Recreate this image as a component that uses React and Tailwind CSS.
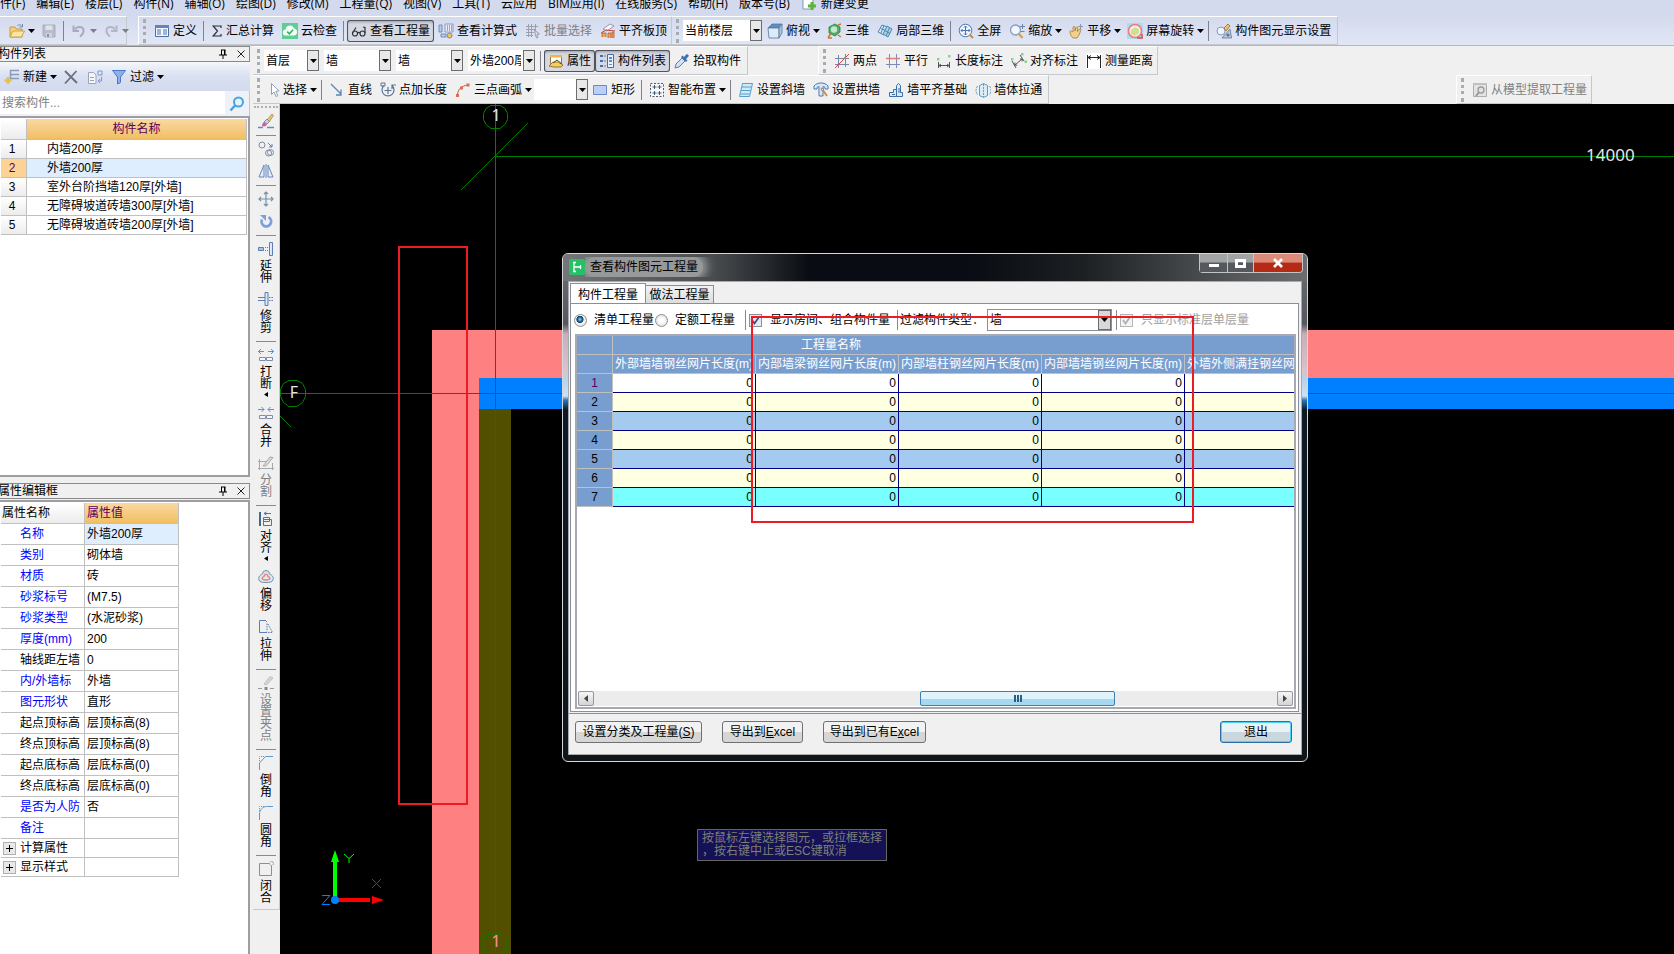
import React from "react";

const G = "#5b7fb0";

const ICONS = {
  folder: (
    <g>
      <path d="M1 14V4h5l1.5 2H13v8z" fill="#f3d27a" stroke="#b98c2c" strokeWidth=".8" />
      <path d="M1 14l3-6h11.5l-3 6z" fill="#fbe6a0" stroke="#c2953a" strokeWidth=".8" />
      <path d="M8 3c2-2 4-1.5 5 .5M13.5 1v3h-3" fill="none" stroke="#6d8fb9" />
    </g>
  ),
  save: (
    <g>
      <path d="M2 2h12v12H3.5L2 12.5z" fill="#b9bdc9" stroke="#a0a4b0" strokeWidth=".8" />
      <path d="M4.5 2.5h7V7h-7z" fill="#dfe2ea" />
      <path d="M5 10h6v4H5z" fill="#cfd3dd" />
      <path d="M6 11h2v3H6z" fill="#8f94a3" />
    </g>
  ),
  undo: (
    <g fill="none" stroke="#a7adbd" strokeWidth="2">
      <path d="M4 6.500c2-3.500 8-3.500 8.500.5.3 3-1.500 5-3.500 6.500" />
      <path d="M2.500 2.500V8H8" />
    </g>
  ),
  redo: (
    <g fill="none" stroke="#b3b8c6" strokeWidth="2">
      <path d="M12 6.500C10 3 4 3 3.500 7c-.3 3 1.500 5 3.500 6.500" />
      <path d="M13.500 2.500V8H8" />
    </g>
  ),
  define: (
    <g>
      <path d="M1.500 2.500h13v11h-13z" fill="#f4f8ff" stroke="#4d6ea3" />
      <path d="M1 2h14v3H1z" fill="#5e84c2" />
      <path d="M3 7h4M3 9h4M3 11h4M9 7h4M9 9h4M9 11h4" stroke="#4d6ea3" />
    </g>
  ),
  sigma: <path d="M12 5V3H4.200l4.300 5-4.300 5H12v-2" fill="none" stroke="#2a2f3a" strokeWidth="1.200" />,
  cloud: (
    <g>
      <path d="M0 0h16v16H0z" fill="#5fce90" />
      <path d="M4 12.500a3 3 0 0 1-.4-6A4.300 4.300 0 0 1 12 5.600a3.500 3.500 0 0 1 .2 6.900z" fill="#f1fff7" />
      <path d="M5.200 8.600l2.200 2.200 3.600-4" fill="none" stroke="#2fae68" strokeWidth="1.500" />
    </g>
  ),
  glasses: (
    <g fill="none" stroke="#2b3140" strokeWidth="1.200">
      <circle cx="4" cy="10.500" r="2.500" />
      <circle cx="11.500" cy="10.500" r="2.500" />
      <path d="M6.500 10c.8-.8 1.800-.8 2.500 0M1.500 10L5 4.500M14 10V4.500l-2-.5" />
    </g>
  ),
  formula: (
    <g>
      <path d="M7 1h8v8H7z" fill="#e8edf8" stroke="#7485ab" strokeWidth=".8" />
      <path d="M9 3h1M11 3h1M13 3h1M9 5h1M11 5h1M13 5h1M9 7h1M11 7h1M13 7h1" stroke="#536387" />
      <path d="M1 2h3v7H1zM3 11h5v3H3z" fill="#b9cdea" stroke="#5b7fb0" strokeWidth=".8" />
      <circle cx="11.500" cy="12.500" r="2.500" fill="#f1c063" stroke="#7186b5" />
    </g>
  ),
  batch: (
    <g fill="none" stroke="#9aa0ad">
      <path d="M1 3.500h12M1 6.500h9M1 9.500h8M1 12.500h7M3.500 1v13M6.500 1v13M10.500 1v7" />
      <path d="M9.500 7l5 4-2.500.5 1 3-1.500.5-1-3z" fill="#d7dae3" />
    </g>
  ),
  slab: (
    <g>
      <path d="M3 6l7-5 4 2-7 5z" fill="#f5f6fa" stroke="#7b8498" strokeWidth=".8" />
      <path d="M2 14v-4h4v4M8 15v-5h3v5M12 15V9h2v6" fill="#f0a94a" stroke="#b0583a" strokeWidth=".8" />
      <path d="M1 10l5-3 9 1" fill="none" stroke="#c2443a" />
    </g>
  ),
  cube: (
    <g strokeWidth=".8" stroke="#56779d">
      <path d="M1 5l4-4h10l-3 4z" fill="#5c8fc0" />
      <path d="M1 5h11v10H2z" fill="#dcebf8" />
      <path d="M12 5l3-4v9l-3 5z" fill="#a6c8e4" />
    </g>
  ),
  view3d: (
    <g>
      <path d="M3 4l6-3 5 3v5l-5 4-6-3z" fill="#4fae62" stroke="#2c7a42" strokeWidth=".8" />
      <circle cx="8" cy="6.500" r="3.200" fill="#d8f2dc" opacity=".85" />
      <path d="M2 15l3-5M2 15h4M12 2l3-1M12 12l3 2" stroke="#c9763a" strokeWidth="1.500" fill="none" />
    </g>
  ),
  local3d: (
    <g fill="#d7ecf8" stroke="#4f87ad">
      <path d="M1 9l4-7 5 2-3 8z" />
      <path d="M6 11l4-8 5 3-4 8z" fill="#a9d2ea" />
      <path d="M3.500 5.500l5 2M8 7.500l5 3M7 2.500L4 10M12.500 4.500L9 13" fill="none" />
    </g>
  ),
  fit: (
    <g fill="none" stroke="#4f77ad">
      <circle cx="7.500" cy="7.500" r="6.300" fill="#eef5ff" />
      <path d="M7.500 3v9M3 7.500h9M6 4.500L7.500 3 9 4.500M6 10.500L7.500 12 9 10.500M4.500 6L3 7.500 4.500 9M10.500 6L12 7.500 10.500 9" />
      <path d="M12 12l3 3" stroke="#c58b43" strokeWidth="2" />
    </g>
  ),
  zoom: (
    <g fill="none">
      <circle cx="6.500" cy="7" r="5" fill="#eef6ff" stroke="#8e9cb5" strokeWidth="1.300" />
      <path d="M10 11l3.500 4" stroke="#dca24a" strokeWidth="2.400" />
      <path d="M13.500 1v5M11 3.500h5M11.500 8.500h4" stroke="#6684ad" />
    </g>
  ),
  pan: (
    <g>
      <path d="M2 9c0-2 2-1 3 0V4.500c0-1.500 2-1.500 2 0V8l1-3.500c.4-1 2-.7 1.700.5L9.500 8.500l2-2.500c1-.8 2 .2 1.400 1.200L11 12l-2 3H5c-2-2-3-4-3-6z" fill="#f1cf8d" stroke="#a67b35" strokeWidth=".8" />
      <path d="M12.500 1v5M10 3.500h5" stroke="#8b95a5" />
    </g>
  ),
  rotateView: (
    <g>
      <path d="M0 0h16v16H0z" fill="#a9dcee" />
      <circle cx="8" cy="8" r="6.500" fill="#fdf0f0" stroke="#ee7b7b" strokeWidth="1.600" />
      <path d="M4 7l4-3 4 2v4l-4 3-4-2z" fill="#c3e29a" />
      <path d="M5 8l3 1v3M8 9l3-2" stroke="#eadb6a" strokeWidth="1.500" fill="none" />
      <path d="M10 15h5v-4" fill="none" stroke="#de4a4a" strokeWidth="1.500" />
    </g>
  ),
  display: (
    <g>
      <circle cx="5" cy="8" r="4" fill="#eef5ff" stroke="#8b9ab3" />
      <path d="M8 5l4-4 2 2-4 5z" fill="#f2c26a" stroke="#8b6a35" strokeWidth=".8" />
      <path d="M6 15l8-9 1.500 9z" fill="#b8c9de" stroke="#5d7394" strokeWidth=".8" />
      <circle cx="12" cy="12" r="1.600" fill="#5d7394" />
    </g>
  ),
  newChange: (
    <g>
      <path d="M2 0h10v12H2z" fill="#fff" stroke="#6fa0bb" />
      <path d="M11 5v8M7 9h8" stroke="#5cb531" strokeWidth="3" />
    </g>
  ),
  prop: (
    <g>
      <path d="M2.500 2.500h11v8h-11z" fill="#fff" stroke="#8a7a4f" />
      <path d="M2 2h12v2.500H2z" fill="#f0b53c" />
      <path d="M1 13l4-4h5l5 3-2 2H6z" fill="#f6cf5c" stroke="#7e6020" strokeWidth=".8" />
      <path d="M5 10l4-3 5 4" fill="none" stroke="#5c4a1c" />
    </g>
  ),
  complist: (
    <g>
      <path d="M1 2h3v2H1zM1 7h3v2H1zM1 12h3v2H1z" fill="#3f6fb7" />
      <path d="M5 3h2M5 8h2M5 13h2" stroke="#6d7c95" />
      <path d="M8.500 1.500h6v13h-6z" fill="#eaf2ff" stroke="#4a6b9d" />
      <path d="M10 4h3v2h-3zM10 7h3v2h-3z" fill="#5c8bd0" />
      <path d="M10 11.500h3" stroke="#5c8bd0" />
    </g>
  ),
  picker: (
    <g>
      <path d="M1 15l1-4 6-6 3 3-6 6z" fill="#cfe2f7" stroke="#5a7fae" />
      <path d="M7 4l5 5 1.500-1.500L12 6l2.500-2.500c.8-1.500-1-3-2.300-2L10 4 8.500 2.500z" fill="#3f71b5" />
    </g>
  ),
  twoPoint: (
    <g fill="none" stroke="#7a86a8">
      <path d="M4.500 2v13M11.500 1v13M1 5.500h14M1 11.500h14" />
      <path d="M1 15L15 1" stroke="#d14747" />
      <circle cx="11" cy="5" r="1" fill="#54b054" stroke="none" />
    </g>
  ),
  parallel: (
    <g fill="none" stroke="#7f89b8">
      <path d="M4.500 1v14M11.500 1v14M1 11.500h14" />
      <path d="M1 5.500h14" stroke="#d88080" strokeWidth="1.500" />
    </g>
  ),
  lenDim: (
    <g fill="none" stroke="#555">
      <path d="M2.500 9v6M13.500 9v6M3 12.500h10M5 11l-2 1.500L5 14M11 11l2 1.500L11 14" />
      <path d="M1 5h2.500v2.500H1zM12 2h2.500v2.500H12z" fill="#86d38a" stroke="none" />
    </g>
  ),
  alignDim: (
    <g fill="none" stroke="#555">
      <path d="M1 8l4 7M9 2l4 6M4 12l7-6M4 9.500L3.700 12l2.500.3M9 6h2.300L11 8.400" />
      <path d="M0 5h2.500v2.500H0zM10 0h2.500v2.500H10zM13.500 7.500H16V10h-2.500z" fill="#86d38a" stroke="none" />
    </g>
  ),
  measure: (
    <g>
      <path d="M0 0h16v16H0z" fill="#fff" />
      <path d="M1.500 2v13M14.500 2v13M2 4.500h12M5 2.500l-3 2 3 2M11 2.500l3 2-3 2" fill="none" stroke="#222" />
    </g>
  ),
  cursor: <path d="M5.500 1.500v11L8 10l2 4.500 1.800-.8-2-4.400 3.200-.3z" fill="#fff" stroke="#8ea0be" />,
  line: <path d="M2 2l10 10M12 7.500V13H7" fill="none" stroke="#5a82b8" strokeWidth="1.300" />,
  pointLen: (
    <g fill="none" stroke="#5a7299" strokeWidth="1.200">
      <path d="M4 3.500a6 6 0 1 0 8 0M12 7V3h4" />
      <path d="M8 5v7M4.500 8.500h7" />
      <path d="M1 1h4v3H1z" strokeWidth="1" />
    </g>
  ),
  arc: (
    <g fill="none" stroke="#8a6a62">
      <path d="M2.500 13c.5-6 4-9 10-10" />
      <path d="M1 12h3v3H1zM5 4.500h3v3H5zM11.500 1.500h3v3h-3z" fill="#e4694d" stroke="none" />
    </g>
  ),
  rect: <path d="M1.500 3.500h13v9h-13z" fill="#bcd0f7" stroke="#6d89c9" />,
  smart: (
    <g fill="none" stroke="#4c5a70">
      <path d="M1.500 1.500h13v13h-13z" strokeDasharray="2 1.500" fill="#f5f8fc" />
      <path d="M5.500 3v4M3.500 5h4M10.500 3v4M8.500 5h4M5.500 9v4M3.500 11h4M10.500 9v4M8.500 11h4" />
    </g>
  ),
  slope: (
    <g fill="#cfeaf8" stroke="#58a0cc">
      <path d="M4.500 1.500h10l-3 13h-10z" />
      <path d="M4 5h9.500M3 8.500h9.500M2.300 12h9.500" fill="none" />
    </g>
  ),
  arch: (
    <g>
      <path d="M1 4c3-4 11-4 14 0v3h-3V5.500c-1-.8-1.500-1-2-1V14H6V4.500c-.5 0-1 .2-2 1V7H1z" fill="#dbe8f8" stroke="#4a7ab8" />
      <path d="M9 7l5 7" stroke="#d08a4a" strokeWidth="2" />
      <path d="M8 6l3 1-2 2z" fill="#f7e6c0" stroke="#7d6b4b" strokeWidth=".6" />
    </g>
  ),
  foundation: (
    <g fill="#d9e9f8" stroke="#3e6fa6">
      <path d="M1.500 14.500v-4h4v-3h3v7zM8.500 14.500V3.500l2-2 2 2v7h2v4z" />
      <path d="M4 12.500h3M11 6v5" fill="none" />
    </g>
  ),
  through: (
    <g fill="none" stroke="#5c9cc8">
      <path d="M4.500 3.500l4-2 4 2v10l-4 2-4-2z" fill="#d8edf8" />
      <path d="M8.500 2v13M2.500 4c-2 3-2 6 0 9M14.500 4c2 3 2 6 0 9" strokeDasharray="2 1" />
    </g>
  ),
  extract: (
    <g>
      <path d="M1.500 1.500h13v13h-13z" fill="#e2e2e2" stroke="#adadad" />
      <path d="M1 1h14v2H1z" fill="#c0c0c0" />
      <circle cx="9" cy="8" r="3" fill="none" stroke="#9a9a9a" strokeWidth="1.300" />
      <path d="M7 10l-3 4" stroke="#9a9a9a" strokeWidth="2" />
    </g>
  ),
  add: (
    <g>
      <path d="M6 1.500h9M6 5.500h9M6 9.500h9M6.500 1v9" stroke="#8a9bb8" strokeWidth="1.500" fill="none" />
      <path d="M4 8v7M.5 11.500h7" stroke="#edbe3c" strokeWidth="2.600" />
    </g>
  ),
  del: <path d="M2 2l12 12M13.500 2L2 14.500" stroke="#6b6f78" strokeWidth="1.800" fill="none" />,
  copyDoc: (
    <g fill="#f4f6fa" stroke="#9aa5ba">
      <path d="M1.500 3.500h5L9 6v8.500H1.500z" />
      <path d="M3 8.500h4M3 11.500h4" />
      <path d="M11 2h4v4h-4zM14.500 8v4h-3M13 10l-2 2 2 2" fill="none" stroke="#7f97cf" />
    </g>
  ),
  funnel: <path d="M1.500 1.500h13L9.500 8v5.500l-3 1.500V8z" fill="#8bb0ea" stroke="#4e78c4" />,
  search: (
    <g fill="none" stroke="#4aa3e0" strokeWidth="2">
      <circle cx="9.500" cy="6" r="4.500" fill="#e4f4ff" />
      <path d="M6 9.500l-4.500 5" strokeWidth="2.500" />
    </g>
  ),
  brush: (
    <g>
      <path d="M9 7l5-6 1.500 1.500L11 9z" fill="#f0cd5c" stroke="#8f7c3f" strokeWidth=".7" />
      <path d="M6 9l3-3 2.500 2.500L9 11z" fill="#c9cfdb" stroke="#6b7387" strokeWidth=".7" />
      <path d="M4 13c0-2 .5-3 2-4l3 2.500c-.8 1.800-3 2.500-5 1.500z" fill="#cf5f9e" />
      <path d="M0 14.500h5M9 14.500h7" stroke="#5b8fc0" strokeWidth="1.500" />
    </g>
  ),
  copy: (
    <g fill="none" stroke="#7d8ba5">
      <circle cx="4" cy="4" r="3" />
      <circle cx="10.500" cy="12" r="3" />
      <circle cx="12.500" cy="11.500" r="3" />
      <path d="M10 2l4 4M14 3v3h-3" stroke="#5b7fb0" />
    </g>
  ),
  mirror: (
    <g fill="#e5eefb" stroke="#6687bf">
      <path d="M6 2v12H1zM10 2v12h5z" />
      <path d="M8 1v14" />
    </g>
  ),
  move: (
    <g fill="none" stroke="#7392ab" strokeWidth="1.200">
      <path d="M8 1v14M1 8h14M6 3l2-2 2 2M6 13l2 2 2-2M3 6L1 8l2 2M13 6l2 2-2 2" />
    </g>
  ),
  rotate: (
    <g fill="none" stroke="#7d9fdb">
      <path d="M4 6.500A4.800 4.800 0 1 0 10.500 4.300" strokeWidth="2.800" />
      <path d="M2 2h6v6z" fill="#7d9fdb" stroke="none" />
    </g>
  ),
  extend: (
    <g fill="#dbe8f5" stroke={G}>
      <path d="M11.500 1.500h3v13h-3z" />
      <path d="M.5 6.500h5v3h-5z" fill="#a8c6e4" />
      <path d="M7 6.500h4M7 9.500h4" strokeDasharray="1 1" />
    </g>
  ),
  trim: (
    <g fill="#dbe8f5" stroke={G}>
      <path d="M7 1.500h3v13H7z" />
      <path d="M0 6.500h7M0 9.500h7" />
      <path d="M11 6.500h5M11 9.500h5" strokeDasharray="1.500 1" />
    </g>
  ),
  breakApart: (
    <g fill="#f4f6fa" stroke="#7f8ea8">
      <path d="M1.500 10.500h6v3h-6zM8.500 10.500h6v3h-6z" />
      <path d="M0 4.500h6M10 4.500h6M3 2L.5 4.500 3 7M13 2l2.500 2.500L13 7" fill="none" stroke="#5f8fd6" />
    </g>
  ),
  merge: (
    <g fill="#f4f6fa" stroke="#7f8ea8">
      <path d="M1.500 10.500h6v3h-6zM8.500 10.500h6v3h-6z" />
      <path d="M0 4.500h6M10 4.500h6M3.500 2L6 4.500 3.500 7M12.500 2L10 4.500 12.500 7" fill="none" stroke="#5f8fd6" />
    </g>
  ),
  split: (
    <g fill="none" stroke="#a9a9a9">
      <path d="M1.500 4v11M14.500 8v7M0 6.500h9M0 13.500h16" />
      <path d="M5 11l7-9 3 .5L8 11z" fill="#dcdcdc" />
    </g>
  ),
  align: (
    <g fill="none">
      <path d="M1 1h2v14H1z" fill="#3f6d8c" />
      <path d="M5.500 6.500h6v4h-6z" stroke="#5b68cf" />
      <path d="M5.500 8.500h8v6h-8z" stroke="#b84a5a" />
      <path d="M6 2.500h7M8.500 1L6 2.500 8.500 4" stroke="#5b68cf" />
    </g>
  ),
  offset: (
    <g fill="none">
      <path d="M4.500 5a3.500 3.500 0 0 1 7 0c3 1 4.500 4 3.500 6-.8 2-3 2.500-7 2.500S1.800 13 1 11C0 9 1.500 6 4.500 5z" fill="#dce8ef" stroke="#6b8fa8" />
      <path d="M6.500 6.500c.5-1.800 2.500-1.800 3 0 .3 1.500 2.500 1 2.300 3-.2 1.500-1.800 1.500-3.800 1.500s-3.600 0-3.800-1.500c-.2-2 2-1.500 2.300-3z" stroke="#ea7d76" strokeWidth="1.300" />
    </g>
  ),
  stretch: (
    <g fill="none" stroke={G}>
      <path d="M8 1.500H1.500v12H9" />
      <path d="M8 2l1 1M9 4.500v8M10 5l4.500 8.500H9" strokeDasharray="1.500 1" />
    </g>
  ),
  grip: (
    <g>
      <path d="M6 9l6-7.500 3 1.500-6.500 7z" fill="#d6d6d6" stroke="#b0b0b0" strokeWidth=".7" />
      <path d="M0 13.500h4M12 13.500h4" stroke="#9a9a9a" />
      <path d="M6.500 12h3v3h-3z" fill="#8a8a8a" />
    </g>
  ),
  chamfer: (
    <g fill="none" stroke="#5b9bd0">
      <path d="M1.500 15V8l6-6.500H15" />
      <path d="M1.500 6V1.500H6" strokeDasharray="1 1" />
    </g>
  ),
  fillet: (
    <g fill="none" stroke="#5b9bd0">
      <path d="M1.500 15V9c0-4 3-7.500 7-7.500H15" />
      <path d="M1.500 6V1.500H6" strokeDasharray="1 1" />
    </g>
  ),
  close: (
    <g fill="none" stroke="#5b9bd0">
      <path d="M11 2.500H1.500v12h12V5" />
      <circle cx="13.500" cy="2.500" r="2" strokeDasharray="1.500 .8" />
    </g>
  ),
};

function Icon({ name, narrow }) {
  return (
    <svg
      viewBox={narrow ? "2 0 12 16" : "0 0 16 16"}
      className={"h-4 shrink-0 " + (narrow ? "w-3" : "w-4")}
      aria-hidden="true"
    >
      {ICONS[name]}
    </svg>
  );
}

function Down({ className = "text-black" }) {
  return (
    <svg viewBox="0 0 7 4" className={"h-1 w-[7px] shrink-0 " + className} aria-hidden="true">
      <path d="M0 0h7L3.500 4z" fill="currentColor" />
    </svg>
  );
}

function Sep() {
  return <span className="mx-[2px] h-5 w-[2px] shrink-0 border-l border-[#7d828e]" />;
}

function Grip() {
  return <span className="mx-1 h-6 w-[3px] shrink-0 border-l-[3px] border-dotted border-[#a9abb3]" />;
}

function Tool({ icon, label, drop, pressed, disabled, title, narrow }) {
  return (
    <button
      type="button"
      disabled={disabled}
      aria-label={label || title}
      aria-pressed={pressed || undefined}
      className={
        "flex h-[22px] shrink-0 items-center gap-[3px] whitespace-nowrap rounded-[3px] pl-1 " +
        (drop ? "pr-[2px] " : "pr-1 ") +
        (pressed ? "bg-[#d6d9e2] shadow-[inset_0_0_0_1px_#50545e,inset_0_2px_3px_#9a9da8] " : "") +
        (disabled ? "text-[#808080]" : "text-black")
      }
    >
      {icon && <Icon name={icon} narrow={narrow} />}
      {label && <span>{label}</span>}
      {drop && <Down className={disabled ? "text-[#7a7f8c]" : "text-black"} />}
    </button>
  );
}

function Combo({ label, value, className }) {
  return (
    <span className={"flex h-[21px] shrink-0 bg-white " + className}>
      <select aria-label={label} className="min-w-0 flex-1 appearance-none bg-white px-[2px] text-[12px] outline-none">
        <option>{value}</option>
      </select>
      <span className="flex w-3 shrink-0 items-center justify-center border border-[#6d6d6d] bg-[#e8e8e8]">
        <Down />
      </span>
    </span>
  );
}

function Group({ children, className = "" }) {
  return (
    <div className={"flex shrink-0 items-center border-r border-b border-t border-t-white border-r-[#c6c8cf] border-b-[#c6c8cf] " + className}>
      {children}
    </div>
  );
}

const MENU = [
  "文件(F)", "编辑(E)", "楼层(L)", "构件(N)", "辅轴(O)", "绘图(D)", "修改(M)", "工程量(Q)", "视图(V)",
  "工具(T)", "云应用", "BIM应用(I)", "在线服务(S)", "帮助(H)", "版本号(B)",
];

function MenuBar() {
  return (
    <nav className="flex h-4 shrink-0 overflow-hidden bg-[#d3daed]">
      <div className="-ml-3 flex items-start gap-[11px] font-['Open_Sans','Noto_Sans_CJK_SC',sans-serif] leading-[7px]">
        {MENU.map((m) => (
          <button key={m} type="button" className="whitespace-nowrap">{m}</button>
        ))}
        <button type="button" className="flex items-start gap-1 whitespace-nowrap">
          <svg viewBox="0 3 16 13" className="h-[13px] w-4" aria-hidden="true">{ICONS.newChange}</svg>
          新建变更
        </button>
      </div>
    </nav>
  );
}

function MainToolbar() {
  return (
    <div className="flex h-[30px] shrink-0 overflow-hidden border-b border-[#aeb7d0] bg-linear-to-b from-[#d3daed] to-[#e2e7f5]">
      <Group className="w-[127px] pl-[5px]">
        <Tool icon="folder" title="打开" drop />
        <Tool icon="save" title="保存" disabled />
        <Sep />
        <Tool icon="undo" title="撤销" drop disabled />
        <Tool icon="redo" title="恢复" drop disabled />
      </Group>
      <span className="w-[11px] shrink-0" />
      <Group className="border-l border-l-white">
        <Grip />
        <Tool icon="define" label="定义" />
        <Sep />
        <Tool icon="sigma" label="汇总计算" narrow />
        <Tool icon="cloud" label="云检查" />
        <Sep />
        <Tool icon="glasses" label="查看工程量" pressed />
        <Tool icon="formula" label="查看计算式" />
        <Tool icon="batch" label="批量选择" disabled />
        <Tool icon="slab" label="平齐板顶" />
      </Group>
      <Group className="pr-[2px]">
        <Grip />
        <Combo label="楼层显示范围" value="当前楼层" className="mr-[1px] w-[79px]" />
        <Tool icon="cube" label="俯视" drop />
        <Tool icon="view3d" label="三维" />
        <Tool icon="local3d" label="局部三维" />
        <Sep />
        <Tool icon="fit" label="全屏" />
        <Tool icon="zoom" label="缩放" drop />
        <Tool icon="pan" label="平移" drop />
        <Tool icon="rotateView" label="屏幕旋转" drop />
        <Sep />
        <Tool icon="display" label="构件图元显示设置" />
      </Group>
    </div>
  );
}

function SecondToolbar() {
  return (
    <div className="flex h-[29px] shrink-0 overflow-hidden">
      <Group className="pr-[2px]">
        <Grip />
        <div className="flex gap-[5px]">
          <Combo label="楼层" value="首层" className="w-[55px]" />
          <Combo label="构件大类" value="墙" className="w-[67px]" />
          <Combo label="构件类型" value="墙" className="w-[67px]" />
          <Combo label="构件" value="外墙200厚" className="w-[67px]" />
        </div>
        <span className="w-[3px]" />
        <Sep />
        <Tool icon="prop" label="属性" pressed />
        <Tool icon="complist" label="构件列表" pressed />
        <Tool icon="picker" label="拾取构件" />
      </Group>
      <span className="w-[70px] shrink-0" />
      <Group className="border-l border-l-white">
        <Grip />
        <Tool icon="twoPoint" label="两点" />
        <Tool icon="parallel" label="平行" />
        <Tool icon="lenDim" label="长度标注" />
        <Tool icon="alignDim" label="对齐标注" />
        <Tool icon="measure" label="测量距离" />
      </Group>
    </div>
  );
}

function DrawToolbar() {
  return (
    <div className="flex h-[29px] shrink-0 overflow-hidden">
      <Group className="pr-[2px]">
        <Grip />
        <Tool icon="cursor" label="选择" drop narrow />
        <Sep />
        <Tool icon="line" label="直线" />
        <Tool icon="pointLen" label="点加长度" />
        <Tool icon="arc" label="三点画弧" drop />
        <Combo label="画弧方式" value="" className="w-[54px]" />
        <Tool icon="rect" label="矩形" />
        <Sep />
        <Tool icon="smart" label="智能布置" drop />
        <Sep />
        <Tool icon="slope" label="设置斜墙" />
        <Tool icon="arch" label="设置拱墙" />
        <Tool icon="foundation" label="墙平齐基础" />
        <Tool icon="through" label="墙体拉通" />
      </Group>
      <span className="grow" />
      <Group className="mr-[82px] border-l border-l-white">
        <Grip />
        <Tool icon="extract" label="从模型提取工程量" disabled />
      </Group>
    </div>
  );
}

function PanelTitle({ children }) {
  return (
    <div className="flex h-4 shrink-0 items-center border border-l-0 border-[#8a8a8a] bg-[#f0f0f0]">
      <h2 className="-ml-[2px] flex-1 whitespace-nowrap">{children}</h2>
      <button type="button" aria-label="固定" className="mr-2">
        <svg viewBox="0 0 10 10" className="size-[10px]" aria-hidden="true">
          <path d="M3 1h4.500M3.500 1v5M6.500 1v5M1 6h8M5 6v4" stroke="#000" fill="none" />
          <path d="M6 1h1.500v5H6z" />
        </svg>
      </button>
      <button type="button" aria-label="关闭" className="mr-[3px]">
        <svg viewBox="0 0 10 10" className="size-[10px]" aria-hidden="true">
          <path d="M1.500 1.500l7 7M8.500 1.500l-7 7" stroke="#222" fill="none" />
        </svg>
      </button>
    </div>
  );
}

const COMPONENTS = ["内墙200厚", "外墙200厚", "室外台阶挡墙120厚[外墙]", "无障碍坡道砖墙300厚[外墙]", "无障碍坡道砖墙200厚[外墙]"];

function ComponentPanel() {
  return (
    <section className="flex h-[431px] shrink-0 flex-col">
      <PanelTitle>构件列表</PanelTitle>
      <div className="flex h-[29px] shrink-0 items-center bg-linear-to-b from-[#f4f6fb] via-[#d9e0f1] to-[#d3daed]">
        <Tool icon="add" label="新建" drop />
        <Tool icon="del" title="删除" />
        <Tool icon="copyDoc" title="复制" />
        <Tool icon="funnel" label="过滤" drop />
      </div>
      <div className="flex h-[25px] shrink-0 border-r border-[#c6c8cf] bg-[#eef1f8]">
        <input
          aria-label="搜索构件"
          placeholder="搜索构件..."
          className="h-[23px] min-w-0 flex-1 bg-white px-[2px] text-[12px] outline-none placeholder:text-[#808080]"
        />
        <button type="button" aria-label="搜索" className="flex w-6 items-center justify-center">
          <Icon name="search" />
        </button>
      </div>
      <div className="flex-1 border-t-2 border-r-2 border-b-2 border-[#9d9da2] bg-white pt-[1px] pr-[1px] pl-[1px]">
        <table className="w-full table-fixed border-separate border-spacing-0">
          <colgroup>
            <col className="w-[26px]" />
            <col />
          </colgroup>
          <thead>
            <tr className="h-[21px]">
              <th className="border-r border-b border-[#c0c0c0] bg-linear-to-b from-white to-[#ececec]" />
              <th className="border-r border-b border-[#c0c0c0] bg-linear-to-b from-[#fad8a0] to-[#f1bf62] p-0 font-normal text-[#5a0060]">
                构件名称
              </th>
            </tr>
          </thead>
          <tbody>
            {COMPONENTS.map((c, i) => (
              <tr key={c} className="h-[19px]">
                <td
                  className={
                    "border-r border-b border-[#c0c0c0] p-0 pr-[3px] text-center leading-[18px] " +
                    (i === 1 ? "bg-[#fcd394] text-[#5a0060]" : "bg-linear-to-b from-white to-[#ececec]")
                  }
                >
                  {i + 1}
                </td>
                <td
                  className={
                    "border-r border-b border-[#c0c0c0] p-0 pl-5 leading-[18px] whitespace-nowrap " +
                    (i === 1 ? "bg-[#dfeeff]" : "bg-white")
                  }
                >
                  {c}
                </td>
              </tr>
            ))}
          </tbody>
        </table>
      </div>
    </section>
  );
}

const PROPS = [
  ["名称", "外墙200厚", 1], ["类别", "砌体墙", 1], ["材质", "砖", 1], ["砂浆标号", "(M7.5)", 1],
  ["砂浆类型", "(水泥砂浆)", 1], ["厚度(mm)", "200", 1], ["轴线距左墙", "0", 0], ["内/外墙标", "外墙", 1],
  ["图元形状", "直形", 1], ["起点顶标高", "层顶标高(8)", 0], ["终点顶标高", "层顶标高(8)", 0],
  ["起点底标高", "层底标高(0)", 0], ["终点底标高", "层底标高(0)", 0], ["是否为人防", "否", 1], ["备注", "", 1],
];

function PropertyPanel() {
  return (
    <section className="flex min-h-0 flex-1 flex-col pt-[6px]">
      <PanelTitle>属性编辑框</PanelTitle>
      <div className="mt-[1px] flex-1 border-t-2 border-r-2 border-[#9d9da2] bg-white pt-[1px] pl-[1px]">
        <table className="w-[178px] table-fixed border-separate border-spacing-0">
          <colgroup>
            <col className="w-[84px]" />
            <col />
          </colgroup>
          <thead>
            <tr className="h-[21px]">
              <th className="border-r border-b border-[#c0c0c0] bg-linear-to-b from-white to-[#ececec] p-0 pl-[1px] text-left font-normal">
                属性名称
              </th>
              <th className="border-r border-b border-[#c0c0c0] bg-linear-to-b from-[#fad8a0] to-[#f1bf62] p-0 pl-[2px] text-left font-normal text-[#5a0060]">
                属性值
              </th>
            </tr>
          </thead>
          <tbody>
            {PROPS.map(([name, value, blue], i) => (
              <tr key={name} className="h-[21px]">
                <td
                  className={
                    "overflow-hidden border-r border-b border-[#c0c0c0] p-0 pl-[19px] leading-5 whitespace-nowrap " +
                    (blue ? "text-[#0000ff]" : "text-black")
                  }
                >
                  {name}
                </td>
                <td className={"border-r border-b border-[#c0c0c0] p-0 pl-[2px] leading-5 whitespace-nowrap " + (i === 0 ? "bg-[#dfeeff]" : "")}>
                  {value}
                </td>
              </tr>
            ))}
            {["计算属性", "显示样式"].map((name) => (
              <tr key={name} className="h-[19px]">
                <td className="border-r border-b border-[#c0c0c0] p-0">
                  <div className="flex items-center gap-1 pl-[2px] leading-[18px]">
                    <button type="button" aria-label={"展开" + name} className="size-[13px] border border-[#b0b0b0] bg-[#e8e8e8]">
                      <svg viewBox="0 0 11 11" className="size-[11px]" aria-hidden="true">
                        <path d="M5.500 2v7M2 5.500h7" stroke="#000" />
                      </svg>
                    </button>
                    {name}
                  </div>
                </td>
                <td className="border-r border-b border-[#c0c0c0] p-0" />
              </tr>
            ))}
          </tbody>
        </table>
      </div>
    </section>
  );
}

const EDIT_TOOLS = [
  { icon: "brush", title: "格式刷" }, "-",
  { icon: "copy", title: "复制" }, { icon: "mirror", title: "镜像" }, "-",
  { icon: "move", title: "移动" }, { icon: "rotate", title: "旋转" }, "-",
  { icon: "extend", label: "延伸" }, { icon: "trim", label: "修剪" }, "-",
  { icon: "breakApart", label: "打断", drop: true }, { icon: "merge", label: "合并" },
  { icon: "split", label: "分割", disabled: true }, "-",
  { icon: "align", label: "对齐", drop: true }, { icon: "offset", label: "偏移" }, { icon: "stretch", label: "拉伸" }, "-",
  { icon: "grip", label: "设置夹点", disabled: true }, "-",
  { icon: "chamfer", label: "倒角" }, { icon: "fillet", label: "圆角" }, "-",
  { icon: "close", label: "闭合" },
];

function EditToolbar() {
  return (
    <div className="w-[27px] shrink-0 bg-[#f0f0f0]">
      <div className="flex flex-col items-center border-r border-b border-[#c6c8cf] pt-[2px] pb-[1px]">
        <span className="mb-[2px] h-[2px] w-6 border-t-2 border-dotted border-[#b0b0b0]" />
        {EDIT_TOOLS.map((t, i) =>
          t === "-" ? (
            <span key={i} className="mt-[3px] mb-[2px] h-[1px] w-5 bg-[#8a8a8a]" />
          ) : (
            <button
              key={i}
              type="button"
              disabled={t.disabled}
              aria-label={t.label || t.title}
              className={"flex w-6 flex-col items-center pt-[3px] " + (t.label ? "pb-1 " : "pb-[3px] ") + (t.disabled ? "text-[#808080]" : "text-black")}
            >
              <Icon name={t.icon} />
              {t.label && <span className="mt-[3px] w-3 text-[12px] leading-3 break-all">{t.label}</span>}
              {t.drop && (
                <svg viewBox="0 0 4 5" className="mt-[2px] mb-[1px] h-[5px] w-1" aria-hidden="true">
                  <path d="M4 0v5L0 2.500z" />
                </svg>
              )}
            </button>
          )
        )}
      </div>
    </div>
  );
}

function Drawing() {
  return (
    <svg width="1394" height="850" className="absolute top-0 left-0 max-w-none" aria-label="绘图区" role="img">
      <g shapeRendering="crispEdges">
        <path d="M152 226H2400v48H199v576h-47z" fill="#ff8080" />
        <path d="M199 274H2400v31H199z" fill="#0080ff" />
        <path d="M199 305h32v545h-32z" fill="#525000" />
        <path d="M215.500 0v289M0 289.500h215M215 52.500H2400" stroke="#008000" fill="none" />
        <path d="M215.500 289v561M215 289.500H2400" stroke="#ff0000" fill="none" />
      </g>
      <g stroke="#008000" fill="none">
        <path d="M181 86l67-67M0 312l11 11" />
        <path d="M211 1.500h9l5 3 2.500 5v6l-2.500 5-5 4h-9l-5-4-2.500-5v-6l2.500-5z" />
        <path d="M9 276.500h8l5.500 3 3 6v7l-3 6-5.500 4H9l-5.500-4-3-6v-7l3-6z" />
        <path d="M203 836l6-6h12l6 6v8l-4 6M203 836v8l4 6" />
      </g>
      <g fill="#e6e6e6" className="font-['Noto_Sans',sans-serif] text-[16px]">
        <text x="216" y="17" textAnchor="middle">1</text>
        <text x="14" y="294" textAnchor="middle">F</text>
        <text x="1306" y="57" className="text-[17px]">14000</text>
        <text x="216" y="843" textAnchor="middle" fill="#ff9090">1</text>
      </g>
      <path d="M55 758v36" stroke="#00ff00" strokeWidth="4" />
      <path d="M55 746l4 12h-8z" fill="#00ff00" />
      <path d="M58 796h32" stroke="#ff0000" strokeWidth="4" />
      <path d="M104 796l-12 4v-8z" fill="#ff0000" />
      <circle cx="55" cy="796" r="4" fill="#0080ff" />
      <g fill="none">
        <path d="M64 750l5 4.500 5-4.500M69 754.500V759" stroke="#00ff00" />
        <path d="M92 775l9 9M101 775l-9 9" stroke="#ff0000" />
        <path d="M42 791.500h8l-8 9h8" stroke="#0080ff" />
      </g>
    </svg>
  );
}

function Check({ label, checked, disabled }) {
  return (
    <label className={"flex items-center gap-2 whitespace-nowrap " + (disabled ? "text-[#a0a0a0]" : "")}>
      <span className="grid size-[13px]">
        <input
          type="checkbox"
          defaultChecked={checked}
          disabled={disabled}
          className={"col-start-1 row-start-1 size-[13px] appearance-none border " + (disabled ? "border-[#b5b5b5] bg-[#f4f4f4]" : "border-[#8a8f99] bg-[#e6ebf2]")}
        />
        <svg viewBox="0 0 13 13" className="pointer-events-none col-start-1 row-start-1 size-[13px]" aria-hidden="true">
          <path d="M3 6l2.500 3.500L10 3" fill="none" stroke={disabled ? "#b0b0b0" : "#3a4f8f"} strokeWidth="1.800" />
        </svg>
      </span>
      {label}
    </label>
  );
}

function Radio({ label, checked }) {
  return (
    <label className="flex items-center gap-[7px] whitespace-nowrap">
      <input
        type="radio"
        name="quantity"
        defaultChecked={checked}
        className="size-[13px] appearance-none rounded-full border border-[#8e8f8f] bg-[radial-gradient(circle,#fdfdfd_30%,#cfd2d6)] checked:bg-[radial-gradient(circle_at_45%_40%,#8fd8f8_0,#1a6a9c_25%,#123a5c_36%,#f2f4f6_44%,#d8dbde)]"
      />
      {label}
    </label>
  );
}

const HEADERS = ["外部墙墙钢丝网片长度(m)", "内部墙梁钢丝网片长度(m)", "内部墙柱钢丝网片长度(m)", "内部墙墙钢丝网片长度(m)", "外墙外侧满挂钢丝网"];
const ROW_BG = ["bg-white", "bg-[#ffffe1]", "bg-[#a4caf0]", "bg-[#ffffe1]", "bg-[#a4caf0]", "bg-[#ffffe1]", "bg-[#7affff]"];

function QuantityGrid() {
  return (
    <div className="mr-[2px] mb-[2px] ml-1 flex min-h-0 flex-1 flex-col overflow-hidden border-2 border-[#a6a8b2] bg-white">
      <table className="w-full table-fixed border-separate border-spacing-0">
        <colgroup>
          <col className="w-[36px]" />
          <col className="w-[143px]" />
          <col className="w-[143px]" />
          <col className="w-[143px]" />
          <col className="w-[143px]" />
          <col />
        </colgroup>
        <thead className="bg-[#789ed0] text-white">
          <tr className="h-[19px]">
            <th className="border-r border-b border-[#c0c0c0] p-0" />
            <th colSpan="5" className="border-b border-[#c0c0c0] p-0 pl-[188px] text-left leading-[18px] font-normal">工程量名称</th>
          </tr>
          <tr className="h-[19px]">
            <th className="border-r border-b border-[#c0c0c0] p-0" />
            {HEADERS.map((h, i) => (
              <th key={h} className={"overflow-hidden border-b border-[#c0c0c0] p-0 pl-[2px] text-left leading-[18px] font-normal whitespace-nowrap " + (i < 4 ? "border-r" : "")}>
                {h}
              </th>
            ))}
          </tr>
        </thead>
        <tbody>
          {ROW_BG.map((bg, r) => (
            <tr key={r} className={"h-[19px] " + bg}>
              <td className={"border-r border-b border-[#c0c0c0] bg-[#789ed0] p-0 text-center leading-[18px] " + (r === 0 ? "text-[#5a0060]" : "text-black")}>
                {r + 1}
              </td>
              {HEADERS.map((h, i) => (
                <td key={h} className={"border-b border-[#000080] p-0 pr-[2px] text-right leading-[18px] " + (i < 4 ? "border-r" : "")}>
                  {i < 4 ? "0" : ""}
                </td>
              ))}
            </tr>
          ))}
        </tbody>
      </table>
      <div className="flex-1" />
      <div className="mx-[1px] mb-[1px] flex h-[15px] bg-[#ececec]">
        <button type="button" aria-label="向左滚动" className="flex w-4 items-center justify-center rounded-[2px] border border-[#989898] bg-linear-to-b from-[#f6f6f6] to-[#d4d4d4]">
          <svg viewBox="0 0 4 7" className="h-[7px] w-1" aria-hidden="true"><path d="M4 0v7L0 3.500z" fill="#444" /></svg>
        </button>
        <span className="w-[326px] shrink-0" />
        <span className="flex w-[195px] items-center justify-center gap-[1px] rounded-[2px] border border-[#3c7fb1] bg-linear-to-b from-[#dff3fd] from-50% to-[#a6d8f2] to-50%">
          <i className="h-[7px] w-[2px] bg-[#2c5f86]" />
          <i className="h-[7px] w-[2px] bg-[#2c5f86]" />
          <i className="h-[7px] w-[2px] bg-[#2c5f86]" />
        </span>
        <span className="flex-1" />
        <button type="button" aria-label="向右滚动" className="flex w-4 items-center justify-center rounded-[2px] border border-[#989898] bg-linear-to-b from-[#f6f6f6] to-[#d4d4d4]">
          <svg viewBox="0 0 4 7" className="h-[7px] w-1" aria-hidden="true"><path d="M0 0v7l4-3.500z" fill="#444" /></svg>
        </button>
      </div>
    </div>
  );
}

const BTN = "h-[22px] rounded-[3px] border border-[#707070] bg-linear-to-b from-[#f2f2f2] from-50% to-[#d6d6d6] to-50% whitespace-nowrap ";

function QuantityDialog() {
  return (
    <div
      role="dialog"
      aria-label="查看构件图元工程量"
      className="absolute top-[149px] left-[282px] flex h-[509px] w-[746px] flex-col overflow-hidden rounded-[6px] border border-[#d5d8da] bg-[linear-gradient(180deg,#6b6f73_0,#55595d_70px,#c9aeb8_80px,#d9c3cc_118px,#b5d3ee_126px,#cfe0f0_142px,#2a78bb_146px,#0c1a28_156px,#10151a_100%)]"
    >
      <div className="flex h-[27px] shrink-0 items-start bg-[linear-gradient(90deg,#74777a_0,#4a4d50_20%,#090d13_33%,#090d13_55%,#1c2023_70%,#5a5c5e_92%,#6b6d6f_100%)]">
        <svg viewBox="0 0 16 16" className="mt-[5px] ml-[6px] size-4" aria-hidden="true">
          <rect width="16" height="16" rx="2" fill="#27c067" />
          <path d="M5 3v10M4 3.500h3M4 12.500h3M5 8h7M11.500 6v4" stroke="#fff" strokeWidth="1.300" fill="none" />
        </svg>
        <h1 className="mt-[3px] rounded-full bg-[#97999b] px-[5px] leading-5 shadow-[0_0_8px_4px_#97999b] [clip-path:inset(0_-14px_0_0)]">
          查看构件图元工程量
        </h1>
        <span className="flex-1" />
        <div className="mr-1 flex h-[19px] rounded-b-[4px] border border-t-0 border-[#c3c5c7]">
          <button type="button" aria-label="最小化" className="flex w-7 items-center justify-center border-r border-[#c3c5c7] bg-linear-to-b from-[#a2a4a6] from-45% to-[#55585c] to-50%">
            <i className="mt-1 h-[3px] w-[10px] bg-white" />
          </button>
          <button type="button" aria-label="最大化" className="flex w-[26px] items-center justify-center border-r border-[#c3c5c7] bg-linear-to-b from-[#a2a4a6] from-45% to-[#55585c] to-50%">
            <i className="h-[9px] w-[11px] border-[3px] border-white" />
          </button>
          <button type="button" aria-label="关闭" className="flex w-[48px] items-center justify-center rounded-br-[3px] bg-linear-to-b from-[#dc8a7a] from-45% to-[#b52a14] to-50%">
            <svg viewBox="0 0 12 10" className="h-[10px] w-3" aria-hidden="true">
              <path d="M2 1l8 8M10 1L2 9" stroke="#fff" strokeWidth="2.600" />
            </svg>
          </button>
        </div>
      </div>
      <div className="mx-[5px] mb-[6px] flex min-h-0 flex-1 flex-col border border-[#a8aaac] bg-[#f0f0f0]">
        <div className="flex min-h-0 flex-1 flex-col pr-[2px] pl-[1px]">
          <div role="tablist" className="-mb-[1px] flex h-[23px] shrink-0 items-end">
            <button type="button" role="tab" aria-selected="true" className="h-[22px] w-[76px] border border-b-0 border-[#8b8d99] bg-white">
              构件工程量
            </button>
            <button type="button" role="tab" aria-selected="false" className="h-5 w-[68px] border border-l-0 border-[#8b8d99] bg-linear-to-b from-[#f2f2f2] to-[#dcdcdc]">
              做法工程量
            </button>
          </div>
          <div className="-mt-[1px] flex min-h-0 flex-1 flex-col border border-[#8b8d99] bg-white">
            <div className="flex h-[30px] shrink-0 items-center pt-[2px] pl-[3px]">
              <Radio label="清单工程量" checked />
              <span className="w-[1px]" />
              <Radio label="定额工程量" />
              <span className="mr-[3px] ml-[10px] h-5 w-[1px] bg-[#8a8a8a]" />
              <Check label="显示房间、组合构件量" checked />
              <span className="mr-[2px] ml-[7px] h-5 w-[1px] bg-[#8a8a8a]" />
              <label htmlFor="ftype" className="w-[87px] whitespace-nowrap">过滤构件类型：</label>
              <span className="flex h-[22px] w-[125px] border border-[#8b8d99] bg-white">
                <select id="ftype" className="min-w-0 flex-1 appearance-none px-[2px] text-[12px] outline-none">
                  <option>墙</option>
                </select>
                <span className="flex w-[13px] items-center justify-center border border-[#6d6d6d] bg-[#d8d8d8]"><Down /></span>
              </span>
              <span className="mr-[3px] ml-[4px] h-5 w-[1px] bg-[#8a8a8a]" />
              <Check label="只显示标准层单层量" checked disabled />
            </div>
            <QuantityGrid />
          </div>
        </div>
        <div className="mt-[1px] flex h-[41px] shrink-0 items-start gap-[20px] border-t border-[#8b8d99] pt-[7px] pr-[9px] pl-[6px]">
          <button type="button" className={BTN + "w-[127px]"}>设置分类及工程量(<u>S</u>)</button>
          <button type="button" className={BTN + "w-[81px]"}>导出到<u>E</u>xcel</button>
          <button type="button" className={BTN + "w-[103px]"}>导出到已有E<u>x</u>cel</button>
          <span className="flex-1" />
          <button type="button" className="h-[22px] w-[72px] rounded-[3px] border border-[#2f6f9f] bg-linear-to-b from-[#eaf2f6] from-50% to-[#c8d8de] to-50% shadow-[inset_0_0_0_1px_#4ad4f8]">退出</button>
        </div>
      </div>
    </div>
  );
}

export default function App() {
  return (
    <div className="flex h-screen flex-col overflow-hidden bg-[#f0f0f0] font-['Liberation_Sans','Noto_Sans_CJK_SC',sans-serif] text-[12px] leading-4 text-black">
      <MenuBar />
      <MainToolbar />
      <div className="flex min-h-0 flex-1">
        <aside className="mr-[3px] flex w-[250px] shrink-0 flex-col">
          <ComponentPanel />
          <PropertyPanel />
        </aside>
        <div className="flex min-w-0 flex-1 flex-col">
          <SecondToolbar />
          <DrawToolbar />
          <div className="flex min-h-0 flex-1">
            <EditToolbar />
            <main className="relative min-w-0 flex-1 overflow-hidden bg-black">
              <Drawing />
              <div className="absolute top-[142px] left-[118px] h-[559px] w-[70px] border-2 border-[#ec1c24]" />
              <QuantityDialog />
              <div className="pointer-events-none absolute top-[212px] left-[471px] h-[207px] w-[443px] border-2 border-[#ec1c24]" />
              <p className="absolute top-[725px] left-[417px] w-[190px] border border-[#66665f] bg-[#151156] px-1 py-[2px] leading-[13px] text-[#7f7f76]">
                按鼠标左键选择图元，或拉框选择
                <br />
                ，按右键中止或ESC键取消
              </p>
            </main>
          </div>
        </div>
      </div>
    </div>
  );
}
